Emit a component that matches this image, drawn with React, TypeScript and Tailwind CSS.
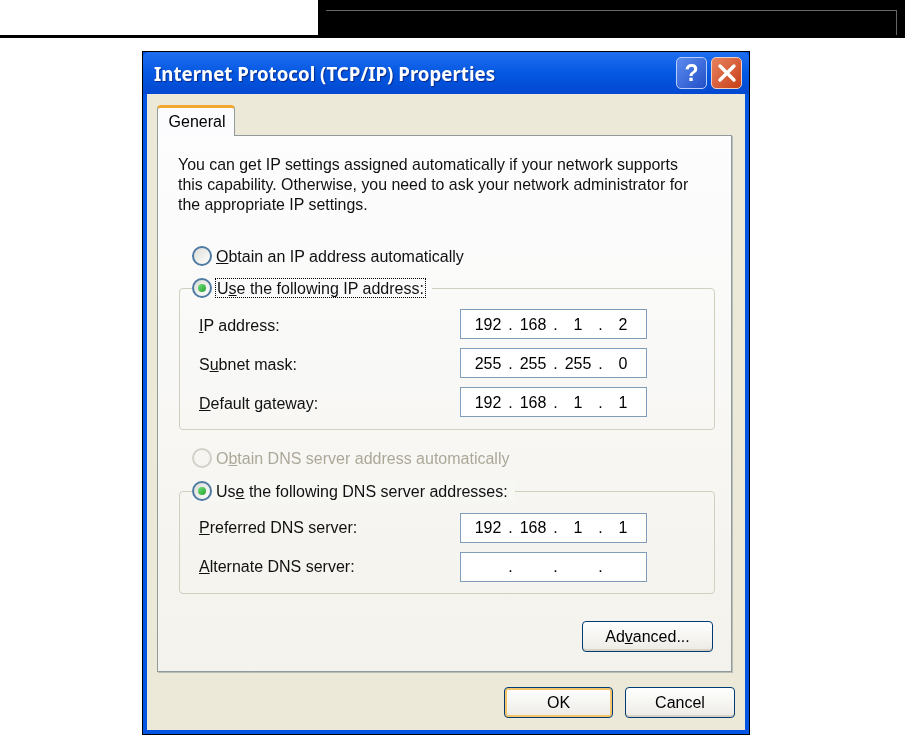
import React from "react";

function Radio({ checked, disabled }: { checked?: boolean; disabled?: boolean }) {
  return (
    <span
      className={
        disabled
          ? "flex h-[20px] w-[20px] shrink-0 items-center justify-center rounded-full border-2 border-[#d2d0c8] bg-[#f6f5f1]"
          : "flex h-[20px] w-[20px] shrink-0 items-center justify-center rounded-full border-2 border-[#4f7ba3] bg-gradient-to-br from-[#dcdcd6] to-[#ffffff]"
      }
    >
      {checked && <span className="h-[8px] w-[8px] rounded-full bg-gradient-to-br from-[#6fe07a] to-[#1fa32d]" />}
    </span>
  );
}

function IpField({ parts, tight }: { parts: string[]; tight?: boolean }) {
  return (
    <div
      className={
        "flex h-[30px] w-[187px] items-center border border-[#7f9db9] bg-white pl-[11px] text-black " +
        (tight ? "" : "pt-[2px]")
      }
    >
      {parts.map((p, i) => (
        <React.Fragment key={i}>
          <span className="w-[32px] text-center">{p}</span>
          {i < 3 && <span className="w-[13px] text-center">.</span>}
        </React.Fragment>
      ))}
    </div>
  );
}

function FieldRow({
  pre,
  u,
  post,
  parts,
  tight,
}: {
  pre?: string;
  u: string;
  post: string;
  parts: string[];
  tight?: boolean;
}) {
  return (
    <div className="flex h-[30px] items-center">
      <span className={"w-[261px] " + (tight ? "" : "pt-[3px]")}>
        {pre}
        <u>{u}</u>
        {post}
      </span>
      <IpField parts={parts} tight={tight} />
    </div>
  );
}

function XpButton({ children, def, w }: { children: React.ReactNode; def?: boolean; w: string }) {
  return (
    <button
      className={
        w +
        " flex h-[31px] items-center justify-center rounded-[4px] border border-[#003c74] bg-gradient-to-b from-[#ffffff] to-[#ecebe5] text-black " +
        (def ? "shadow-[inset_0_0_0_2px_#f5c46a]" : "shadow-[inset_0_-2px_0_#d6d0c5]")
      }
    >
      {children}
    </button>
  );
}

export default function App() {
  return (
    <div className="h-[735px] w-[905px] overflow-hidden bg-white font-['Liberation_Sans',sans-serif] text-[16px] text-[#111]">
      <div className="flex h-[38px]">
        <div className="h-[38px] w-[318px] border-b-[3px] border-black bg-white" />
        <div className="flex-1 bg-black pl-[8px] pr-[8px] pt-[10px]">
          <div className="h-[25px] border-r border-t border-[#666]" />
        </div>
      </div>

      <div className="ml-[142px] mt-[13px] flex h-[684px] w-[608px] flex-col border border-black bg-[#0454e3] blur-[0.3px]">
        <div className="flex h-[42px] shrink-0 items-center justify-between rounded-t-[6px] bg-gradient-to-b from-[#1f6ef0] via-[#0458e2] to-[#0348d0] pl-[11px] pr-[7px]">
          <span className="pt-[3px] font-['Noto_Sans',sans-serif] text-[18.7px] font-bold leading-none text-white [text-shadow:1px_1px_1px_#0a2a8a]">
            Internet Protocol (TCP/IP) Properties
          </span>
          <div className="flex gap-[4px]">
            <div className="flex h-[32px] w-[31px] items-center justify-center rounded-[5px] border border-[#b8cdf5] bg-gradient-to-br from-[#5d8bef] to-[#2350c8] text-[23px] font-bold leading-none text-white">
              ?
            </div>
            <div className="flex h-[32px] w-[31px] items-center justify-center rounded-[5px] border border-[#f0cfc0] bg-gradient-to-br from-[#e8825e] to-[#c63d12]">
              <svg width="20" height="20" viewBox="0 0 20 20">
                <path d="M3 3 L17 17 M17 3 L3 17" stroke="white" strokeWidth="3.4" strokeLinecap="round" />
              </svg>
            </div>
          </div>
        </div>

        <div className="mx-[4px] flex min-h-0 flex-1 flex-col bg-[#ece9d8] pl-[10px] pr-[10px] pt-[11px]">
          <div className="relative z-10 flex h-[31px] w-[78px] items-center justify-center rounded-t-[4px] border-x border-t-[3px] border-x-[#919b9c] border-t-[#f2a72e] bg-[#fcfcfe] pl-[2px] text-black">
            General
          </div>
          <div className="-mt-px h-[537px] w-[575px] shrink-0 border border-[#919b9c] bg-gradient-to-b from-[#fdfdfe] to-[#f3f2ec] pl-[21px] pr-[18px] pt-[19px] shadow-[1px_1px_0_#b8bdb8]">
            <p className="-ml-px w-[530px] whitespace-nowrap text-[15.9px] leading-[20px]">
              You can get IP settings assigned automatically if your network supports
              <br />
              this capability. Otherwise, you need to ask your network administrator for
              <br />
              the appropriate IP settings.
            </p>

            <div className="ml-[13px] mt-[31px] flex h-[20px] items-center gap-[4px]">
              <Radio />
              <span className="pt-[2px]">
                <u>O</u>btain an IP address automatically
              </span>
            </div>

            <div className="relative mt-[22px] h-[142px] w-[536px] rounded-[4px] border border-[#d0d0bf] pl-[19px] pt-[20px]">
              <div className="absolute left-[12px] top-[-11px] flex h-[20px] items-center gap-[3px] bg-[#fafafa] pr-[6px]">
                <Radio checked />
                <span className="flex h-[20px] items-center border border-dotted border-black px-px">
                  <span className="pt-[1px]">
                    U<u>s</u>e the following IP address:
                  </span>
                </span>
              </div>
              <div className="flex flex-col gap-[9px]">
                <FieldRow u="I" post="P address:" parts={["192", "168", "1", "2"]} />
                <FieldRow pre="S" u="u" post="bnet mask:" parts={["255", "255", "255", "0"]} />
                <FieldRow u="D" post="efault gateway:" parts={["192", "168", "1", "1"]} />
              </div>
            </div>

            <div className="ml-[13px] mt-[18px] flex h-[20px] items-center gap-[4px] text-[#aca899]">
              <Radio disabled />
              <span className="pt-[2px]">
                O<u>b</u>tain DNS server address automatically
              </span>
            </div>

            <div className="relative mt-[23px] h-[103px] w-[536px] rounded-[4px] border border-[#d0d0bf] pl-[19px] pt-[21px]">
              <div className="absolute left-[12px] top-[-11px] flex h-[20px] items-center gap-[4px] bg-[#f7f7f4] pr-[7px]">
                <Radio checked />
                <span className="pt-[1px]">
                  Us<u>e</u> the following DNS server addresses:
                </span>
              </div>
              <div className="flex flex-col gap-[9px]">
                <FieldRow tight u="P" post="referred DNS server:" parts={["192", "168", "1", "1"]} />
                <FieldRow tight u="A" post="lternate DNS server:" parts={["", "", "", ""]} />
              </div>
            </div>

            <div className="mt-[27px] flex justify-end">
              <XpButton w="w-[131px]">
                <span className="pt-[1px]">
                  Ad<u>v</u>anced...
                </span>
              </XpButton>
            </div>
          </div>

          <div className="mt-[15px] flex justify-end gap-[12px]">
            <XpButton w="w-[109px]" def>
              OK
            </XpButton>
            <XpButton w="w-[110px]">Cancel</XpButton>
          </div>
        </div>
        <div className="h-[4px] shrink-0" />
      </div>
    </div>
  );
}
